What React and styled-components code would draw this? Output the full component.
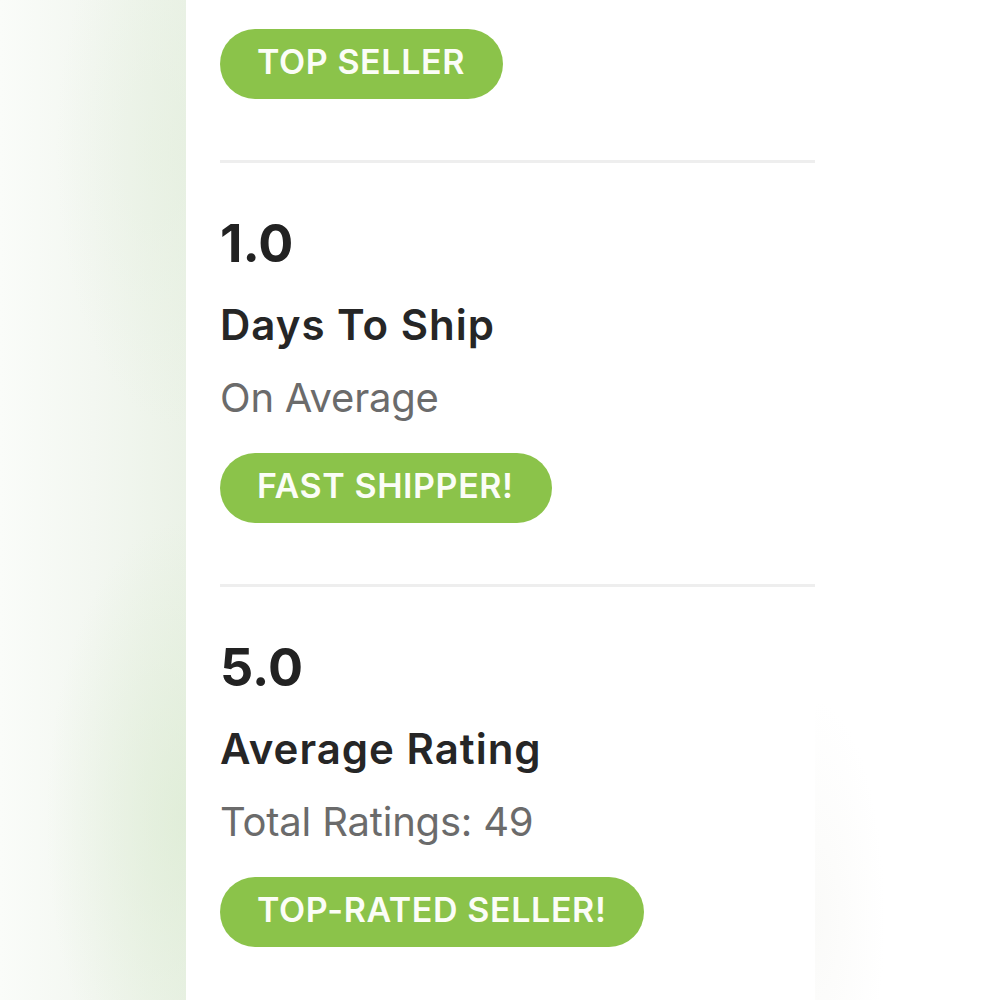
import React from "react";
import styled, { createGlobalStyle } from "styled-components";

const Global = createGlobalStyle`
  html, body { margin: 0; padding: 0; background: #ffffff; }
  body { font-family: "Inter", "Liberation Sans", sans-serif; }
`;

const Page = styled.div`
  display: flex;
  width: 1000px;
  height: 1000px;
  overflow: hidden;
  background: #ffffff;
`;

const SideBlur = styled.div`
  width: 186px;
  flex: none;
  background:
    radial-gradient(ellipse 140px 300px at 186px 820px, rgba(221, 236, 212, 0.75), rgba(221, 236, 212, 0) 100%),
    radial-gradient(ellipse 130px 280px at 186px 150px, rgba(228, 239, 222, 0.6), rgba(228, 239, 222, 0) 100%),
    linear-gradient(to right, #fafcf9 0%, #f3f7f1 50%, #ebf2e7 100%);
`;

const Panel = styled.div`
  width: 629px;
  flex: none;
  padding: 29px 0 0 34px;
  box-sizing: border-box;
  display: flex;
  flex-direction: column;
`;

const RightSpace = styled.div`
  flex: 1;
  background: radial-gradient(ellipse 70px 220px at 0px 920px, rgba(249, 249, 247, 0.8), rgba(255, 255, 255, 0) 100%);
`;

const Section = styled.section`
  display: flex;
  flex-direction: column;
  align-items: flex-start;
  padding-top: ${(p) => (p.$first ? "0" : "55px")};
  padding-bottom: 61px;
  border-bottom: ${(p) => (p.$last ? "none" : "3px solid #eeeeee")};
`;

const Value = styled.div`
  font-size: 52px;
  line-height: 52px;
  font-weight: 700;
  color: #222222;
  letter-spacing: 0;
`;

const Title = styled.div`
  margin-top: 34px;
  font-size: 42px;
  line-height: 42px;
  font-weight: 600;
  color: #262626;
  letter-spacing: 1px;
`;

const Subtitle = styled.div`
  margin-top: 32px;
  font-size: 40px;
  line-height: 40px;
  font-weight: 400;
  color: #6b6b6b;
  letter-spacing: -0.2px;
`;

const Badge = styled.div`
  margin-top: ${(p) => (p.$first ? "0" : "35px")};
  height: 70px;
  box-sizing: border-box;
  padding: 0 38px 5px 37px;
  border-radius: 35px;
  background: #8bc34a;
  color: #fbfdf7;
  display: flex;
  align-items: center;
  font-size: 34px;
  font-weight: 600;
  letter-spacing: 0.6px;
  white-space: nowrap;
`;

const stats = [
  { value: "1.0", title: "Days To Ship", sub: "On Average", badge: "FAST SHIPPER!" },
  { value: "5.0", title: "Average Rating", sub: "Total Ratings: 49", badge: "TOP-RATED SELLER!" },
];

export default function App() {
  return (
    <>
      <Global />
      <Page>
        <SideBlur />
        <Panel>
          <Section $first>
            <Badge $first>TOP SELLER</Badge>
          </Section>
          {stats.map((s, i) => (
            <Section key={s.value} $last={i === stats.length - 1}>
              <Value>{s.value}</Value>
              <Title>{s.title}</Title>
              <Subtitle>{s.sub}</Subtitle>
              <Badge>{s.badge}</Badge>
            </Section>
          ))}
        </Panel>
        <RightSpace />
      </Page>
    </>
  );
}
